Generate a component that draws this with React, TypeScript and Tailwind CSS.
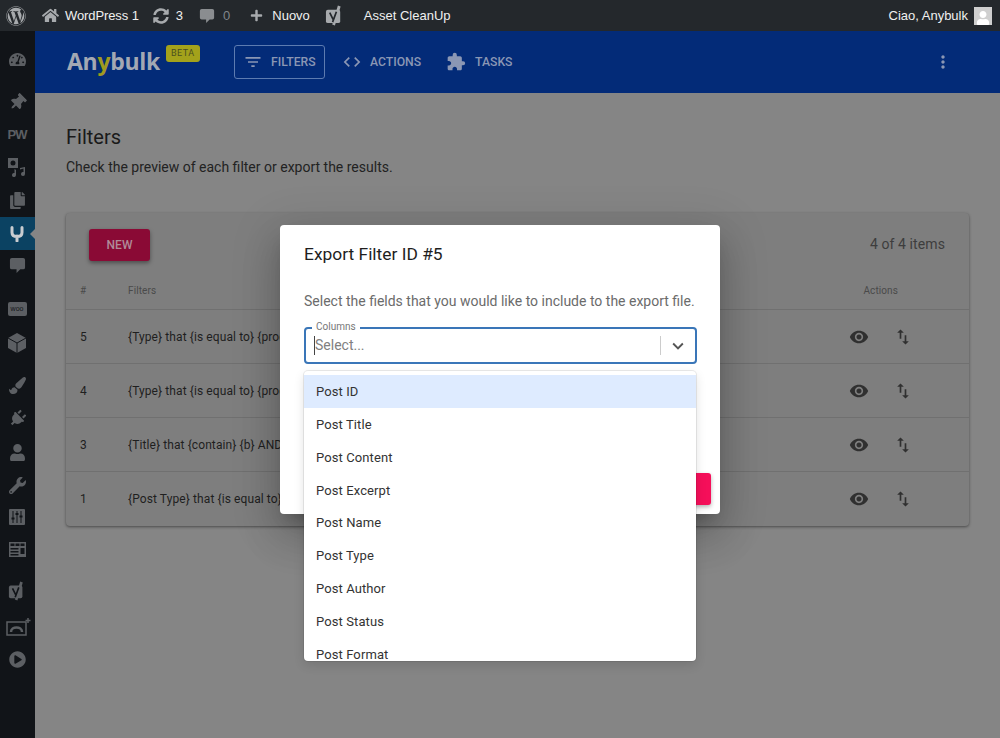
import { FC, ReactNode } from 'react';
import { FaWordpress, FaHome, FaSyncAlt, FaPlus, FaTachometerAlt, FaThumbtack, FaCopy, FaPaintBrush, FaPlug, FaUser, FaWrench, FaPlayCircle } from 'react-icons/fa';
import { MdFilterList, MdCode, MdExtension, MdMoreVert, MdVisibility, MdImportExport, MdKeyboardArrowDown } from 'react-icons/md';

const rows = [
    { id: '5', text: '{Type} that {is equal to} {product}' },
    { id: '4', text: '{Type} that {is equal to} {product}' },
    { id: '3', text: '{Title} that {contain} {b} AND {Type}' },
    { id: '1', text: '{Post Type} that {is equal to} {post}' },
];

const options = ['Post ID', 'Post Title', 'Post Content', 'Post Excerpt', 'Post Name', 'Post Type', 'Post Author', 'Post Status', 'Post Format'];

const SideIcon: FC<{ children: ReactNode, className: string }> = ({ children, className }) => (
    <div className={'flex items-center justify-center text-[#5c5f63] text-[17px] w-[34px] ' + className}>{children}</div>
);

// square speech bubble, same shape in the top bar and the side menu
const Bubble: FC<{ className: string }> = ({ className }) => (
    <svg viewBox="0 0 18 18" fill="currentColor" className={className}>
        <path d="M3 1h12a2 2 0 0 1 2 2v8a2 2 0 0 1-2 2h-3l-4 4v-4H3a2 2 0 0 1-2-2V3a2 2 0 0 1 2-2z" />
    </svg>
);

const YoastMark: FC<{ className: string, cut: string }> = ({ className, cut }) => (
    <svg viewBox="0 0 20 22" className={className}>
        <path d="M3 5h11a2 2 0 0 1 2 2v10a2 2 0 0 1-2 2H3a2 2 0 0 1-2-2V7a2 2 0 0 1 2-2z" fill="currentColor" />
        <path d="M15 1l-6 20" stroke="currentColor" strokeWidth="3" fill="none" />
        <path d="M5 8l3.500 7M12 7l-4 11" stroke={cut} strokeWidth="1.800" fill="none" />
    </svg>
);

const AdminBar: FC = () => (
    <div className="h-[31px] shrink-0 bg-[#24282c] flex items-center text-[13px] text-[#f0f0f0] pl-[6px] pr-[8px] font-['Liberation_Sans',sans-serif]">
        <FaWordpress className="text-[20px] text-[#a7aaad] mr-[16px]" />
        <FaHome className="text-[17px] text-[#a7aaad] mr-[6px]" />
        <span className="mr-[14px] tracking-[-0.1px]">WordPress 1</span>
        <FaSyncAlt className="text-[16px] text-[#a7aaad] mr-[7px]" />
        <span className="mr-[16px]">3</span>
        <Bubble className="w-[16px] h-[16px] text-[#8a8d90] mr-[8px]" />
        <span className="text-[#80858a] mr-[20px]">0</span>
        <FaPlus className="text-[13px] text-[#a7aaad] mr-[9px]" />
        <span className="mr-[15px]">Nuovo</span>
        <YoastMark className="w-[19px] h-[21px] text-[#a7aaad] mr-[20px]" cut="#24282c" />
        <span>Asset CleanUp</span>
        <span className="ml-auto mr-[6px]">Ciao, Anybulk</span>
        <div className="w-[18px] h-[18px] bg-[#cfcfcf] flex items-end justify-center overflow-hidden">
            <FaUser className="text-[14px] text-white" />
        </div>
    </div>
);

const SideBar: FC = () => (
    <div className="w-[35px] shrink-0 bg-[#111418] flex flex-col pt-[17px]">
        <SideIcon className="h-[22px] mb-[21px]"><FaTachometerAlt /></SideIcon>
        <SideIcon className="h-[22px] mb-[11px]"><FaThumbtack className="rotate-45" /></SideIcon>
        <SideIcon className="h-[22px] mb-[10px]"><span className="text-[13px] font-bold font-['Liberation_Sans',sans-serif] tracking-[-1px]">PW</span></SideIcon>
        <SideIcon className="h-[22px] mb-[11px]">
            <svg width="20" height="20" viewBox="0 0 20 20" fill="currentColor">
                <path d="M1 1h10v10H1zM6 3.500a2.500 2.500 0 1 0 0 5 2.500 2.500 0 0 0 0-5z" fillRule="evenodd" />
                <path d="M9 13v5a2 2 0 1 1-1.500-1.900V12zM18 10v7a2 2 0 1 1-1.500-1.900V11.500L13 12.500V11z" />
            </svg>
        </SideIcon>
        <SideIcon className="h-[22px] mb-[6px]"><FaCopy /></SideIcon>
        <div className="relative h-[33px] bg-[#0b4262] flex items-center justify-center w-full mb-[4px]">
            <svg width="14" height="16" viewBox="0 0 14 16" className="mr-[2px]">
                <path d="M2 1.500v5c0 2.500 2 4 5 4s5-1.500 5-4v-5M7 10v5" stroke="#c9ccd0" strokeWidth="3" strokeLinecap="round" fill="none" />
            </svg>
            <div className="absolute right-0 top-[12px] border-y-[5px] border-y-transparent border-r-[5px] border-r-[#858585]" />
        </div>
        <SideIcon className="h-[22px] mb-[22px]"><Bubble className="w-[17px] h-[17px]" /></SideIcon>
        <SideIcon className="h-[22px] mb-[12px]">
            <div className="w-[19px] h-[14px] rounded-[2px] bg-[#5c5f63] text-[7px] leading-[14px] text-center text-[#111418] font-['Liberation_Sans',sans-serif]">woo</div>
        </SideIcon>
        <SideIcon className="h-[22px] mb-[20px]">
            <svg width="18" height="20" viewBox="0 0 18 20">
                <path d="M9 0l9 5v10l-9 5-9-5V5z" fill="currentColor" />
                <path d="M0 5l9 5 9-5M9 10v10" stroke="#111418" strokeWidth="1" fill="none" />
            </svg>
        </SideIcon>
        <SideIcon className="h-[22px] mb-[11px]"><FaPaintBrush /></SideIcon>
        <SideIcon className="h-[22px] mb-[12px]"><FaPlug className="rotate-45" /></SideIcon>
        <SideIcon className="h-[22px] mb-[11px]"><FaUser /></SideIcon>
        <SideIcon className="h-[22px] mb-[10px]"><FaWrench /></SideIcon>
        <SideIcon className="h-[22px] mb-[10px]">
            <svg width="16" height="16" viewBox="0 0 16 16">
                <rect width="16" height="16" rx="1" fill="currentColor" />
                <path d="M4 2v12M8 2v12M12 2v12" stroke="#111418" strokeWidth="1" />
                <path d="M2.500 9.500h3M6.500 5h3M10.500 7.500h3" stroke="#111418" strokeWidth="2" />
            </svg>
        </SideIcon>
        <SideIcon className="h-[22px] mb-[20px]">
            <svg width="17" height="15" viewBox="0 0 17 15" fill="currentColor">
                <path d="M0 0h17v15H0zM1.500 1.500v2.500h4V1.500zm5 0v2.500h4V1.500zm5 0v2.500h4V1.500zM1.500 6v1.500h8V6zm0 3v1.500h8V9zm0 3v1.500h8V12zm10-6v6h4V6z" fillRule="evenodd" />
            </svg>
        </SideIcon>
        <SideIcon className="h-[22px] mb-[14px]"><YoastMark className="w-[18px] h-[20px]" cut="#111418" /></SideIcon>
        <SideIcon className="h-[22px] mb-[10px]">
            <svg width="26" height="20" viewBox="0 0 26 20" fill="none" className="ml-[4px]">
                <path d="M1 5h19v13H1z" stroke="currentColor" strokeWidth="1.500" />
                <path d="M5 15c0-6 11-6 11 0" stroke="currentColor" strokeWidth="2.500" />
                <path d="M22 1v5M19.500 3.500h5" stroke="currentColor" strokeWidth="1.500" />
            </svg>
        </SideIcon>
        <SideIcon className="h-[22px]"><FaPlayCircle /></SideIcon>
    </div>
);

const Header: FC = () => (
    <div className="h-[62px] shrink-0 bg-[#032b78] flex items-center pl-[32px] pr-[47px] text-[#8b97b4] text-[12.200px] font-medium">
        <div className="flex items-start w-[135px] mr-[32px] -mt-[2px]">
            <span className="text-[23px] leading-[30px] font-bold text-[#a3a8b3] font-['Open_Sans',sans-serif] tracking-[-0.3px]">An<span className="text-[#a09a20]">y</span>bulk</span>
            <span className="ml-[6px] -mt-[1px] bg-[#a3a21b] text-[#4a4f20] text-[9px] leading-[16px] h-[17px] px-[5px] rounded-[3px] tracking-[0.5px] font-normal">BETA</span>
        </div>
        <div className="h-[34px] w-[91px] flex items-center border border-[#5d7bb0] rounded-[3px] pl-[8px] mr-[17px]">
            <MdFilterList className="text-[20px] mr-[8px]" />
            <span>FILTERS</span>
        </div>
        <MdCode className="text-[20px] mr-[8px]" />
        <span className="mr-[25px]">ACTIONS</span>
        <MdExtension className="text-[20px] mr-[9px]" />
        <span>TASKS</span>
        <MdMoreVert className="ml-auto text-[20px] text-[#8b97b4]" />
    </div>
);

const Card: FC = () => (
    <div className="bg-[#7e7e7e] rounded-[4px] shadow-[0_1px_3px_rgba(0,0,0,0.45)] h-[313px] text-[12px] tracking-[0.1px] text-[#1f1f1f]">
        <div className="h-[57px] flex items-center justify-between pl-[23px] pr-[24px] pt-[5px]">
            <div className="mt-[2px] w-[61px] h-[32px] rounded-[3px] bg-[#8a0a35] text-[#b08a98] text-[12px] font-medium flex items-center justify-center shadow-[0_2px_4px_rgba(0,0,0,0.4)]">NEW</div>
            <span className="text-[14px] text-[#3d3d3d]">4 of 4 items</span>
        </div>
        <div className="h-[40px] pt-[1px] flex items-center border-b border-[#707070] text-[10px] text-[#4a4a4a]">
            <span className="w-[62px] pl-[14px]">#</span>
            <span>Filters</span>
            <span className="ml-auto mr-[71px]">Actions</span>
        </div>
        {rows.map((row, i) => (
            <div key={row.id} className={'h-[54px] flex items-center ' + (i < 3 ? 'border-b border-[#707070]' : '')}>
                <span className="w-[62px] pl-[14px]">{row.id}</span>
                <span className="whitespace-nowrap">{row.text}</span>
                <div className="ml-auto flex items-center text-[#303030] mr-[56px] gap-[24px]">
                    <MdVisibility className="text-[20px]" />
                    <MdImportExport className="text-[20px]" />
                </div>
            </div>
        ))}
    </div>
);

const ExportDialog: FC = () => (
    <div className="absolute left-[280px] top-[225px] w-[440px] h-[289px] bg-white rounded-[4px] shadow-[0_11px_15px_-7px_rgba(0,0,0,0.2),0_24px_38px_3px_rgba(0,0,0,0.14),0_9px_46px_8px_rgba(0,0,0,0.12)] flex flex-col px-[24px]">
        <h2 className="text-[17.400px] leading-[24px] text-[#1e1e1e] mt-[17px]">Export Filter ID #5</h2>
        <p className="text-[14px] leading-[20px] whitespace-nowrap text-[#6b6b6b] mt-[25px]">Select the fields that you would like to include to the export file.</p>
        <div className="relative mt-[16px] h-[37px] w-[393px] shrink-0 border-2 border-[#3a76b8] rounded-[4px] flex items-center pl-[8px]">
            <span className="absolute left-[6px] -top-[8px] bg-white px-[4px] text-[10px] leading-[12px] text-[#777]">Columns</span>
            <span className="w-px h-[19px] bg-[#444]" />
            <span className="text-[14px] text-[#808080]">Select...</span>
            <span className="ml-auto w-px h-[19px] bg-[#ccc]" />
            <MdKeyboardArrowDown className="text-[22px] text-[#555] mx-[6px]" />
        </div>
        <div className="mt-auto mb-[9px] -mr-[15px] self-end w-[110px] h-[32px] rounded-[3px] bg-[#f50f5a] shadow-[0_2px_4px_rgba(0,0,0,0.3)]" />
        <div className="absolute left-[24px] top-[146px] w-[392px] h-[290px] bg-white rounded-[4px] shadow-[0_0_0_1px_rgba(0,0,0,0.08),0_4px_11px_rgba(0,0,0,0.12)] overflow-hidden pt-[4px]">
            {options.map((option, i) => (
                <div key={option} className={'h-[32.950px] shrink-0 flex items-center pl-[12px] text-[13px] tracking-[0.1px] text-[#333] ' + (i == 0 ? 'bg-[#deebff]' : '')}>{option}</div>
            ))}
        </div>
    </div>
);

const App: FC = () => (
    <div className="relative w-[1000px] h-[738px] overflow-hidden flex flex-col bg-[#858585] font-['Roboto',sans-serif]">
        <AdminBar />
        <div className="flex flex-1 min-h-0">
            <SideBar />
            <div className="flex-1 flex flex-col min-w-0">
                <Header />
                <div className="px-[31px] pt-[31px]">
                    <h1 className="text-[20px] leading-[26px] text-[#1a1a1a]">Filters</h1>
                    <p className="text-[14px] leading-[20px] text-[#222] mt-[7px] mb-[36px]">Check the preview of each filter or export the results.</p>
                    <Card />
                </div>
            </div>
        </div>
        <ExportDialog />
    </div>
);

export default App;
